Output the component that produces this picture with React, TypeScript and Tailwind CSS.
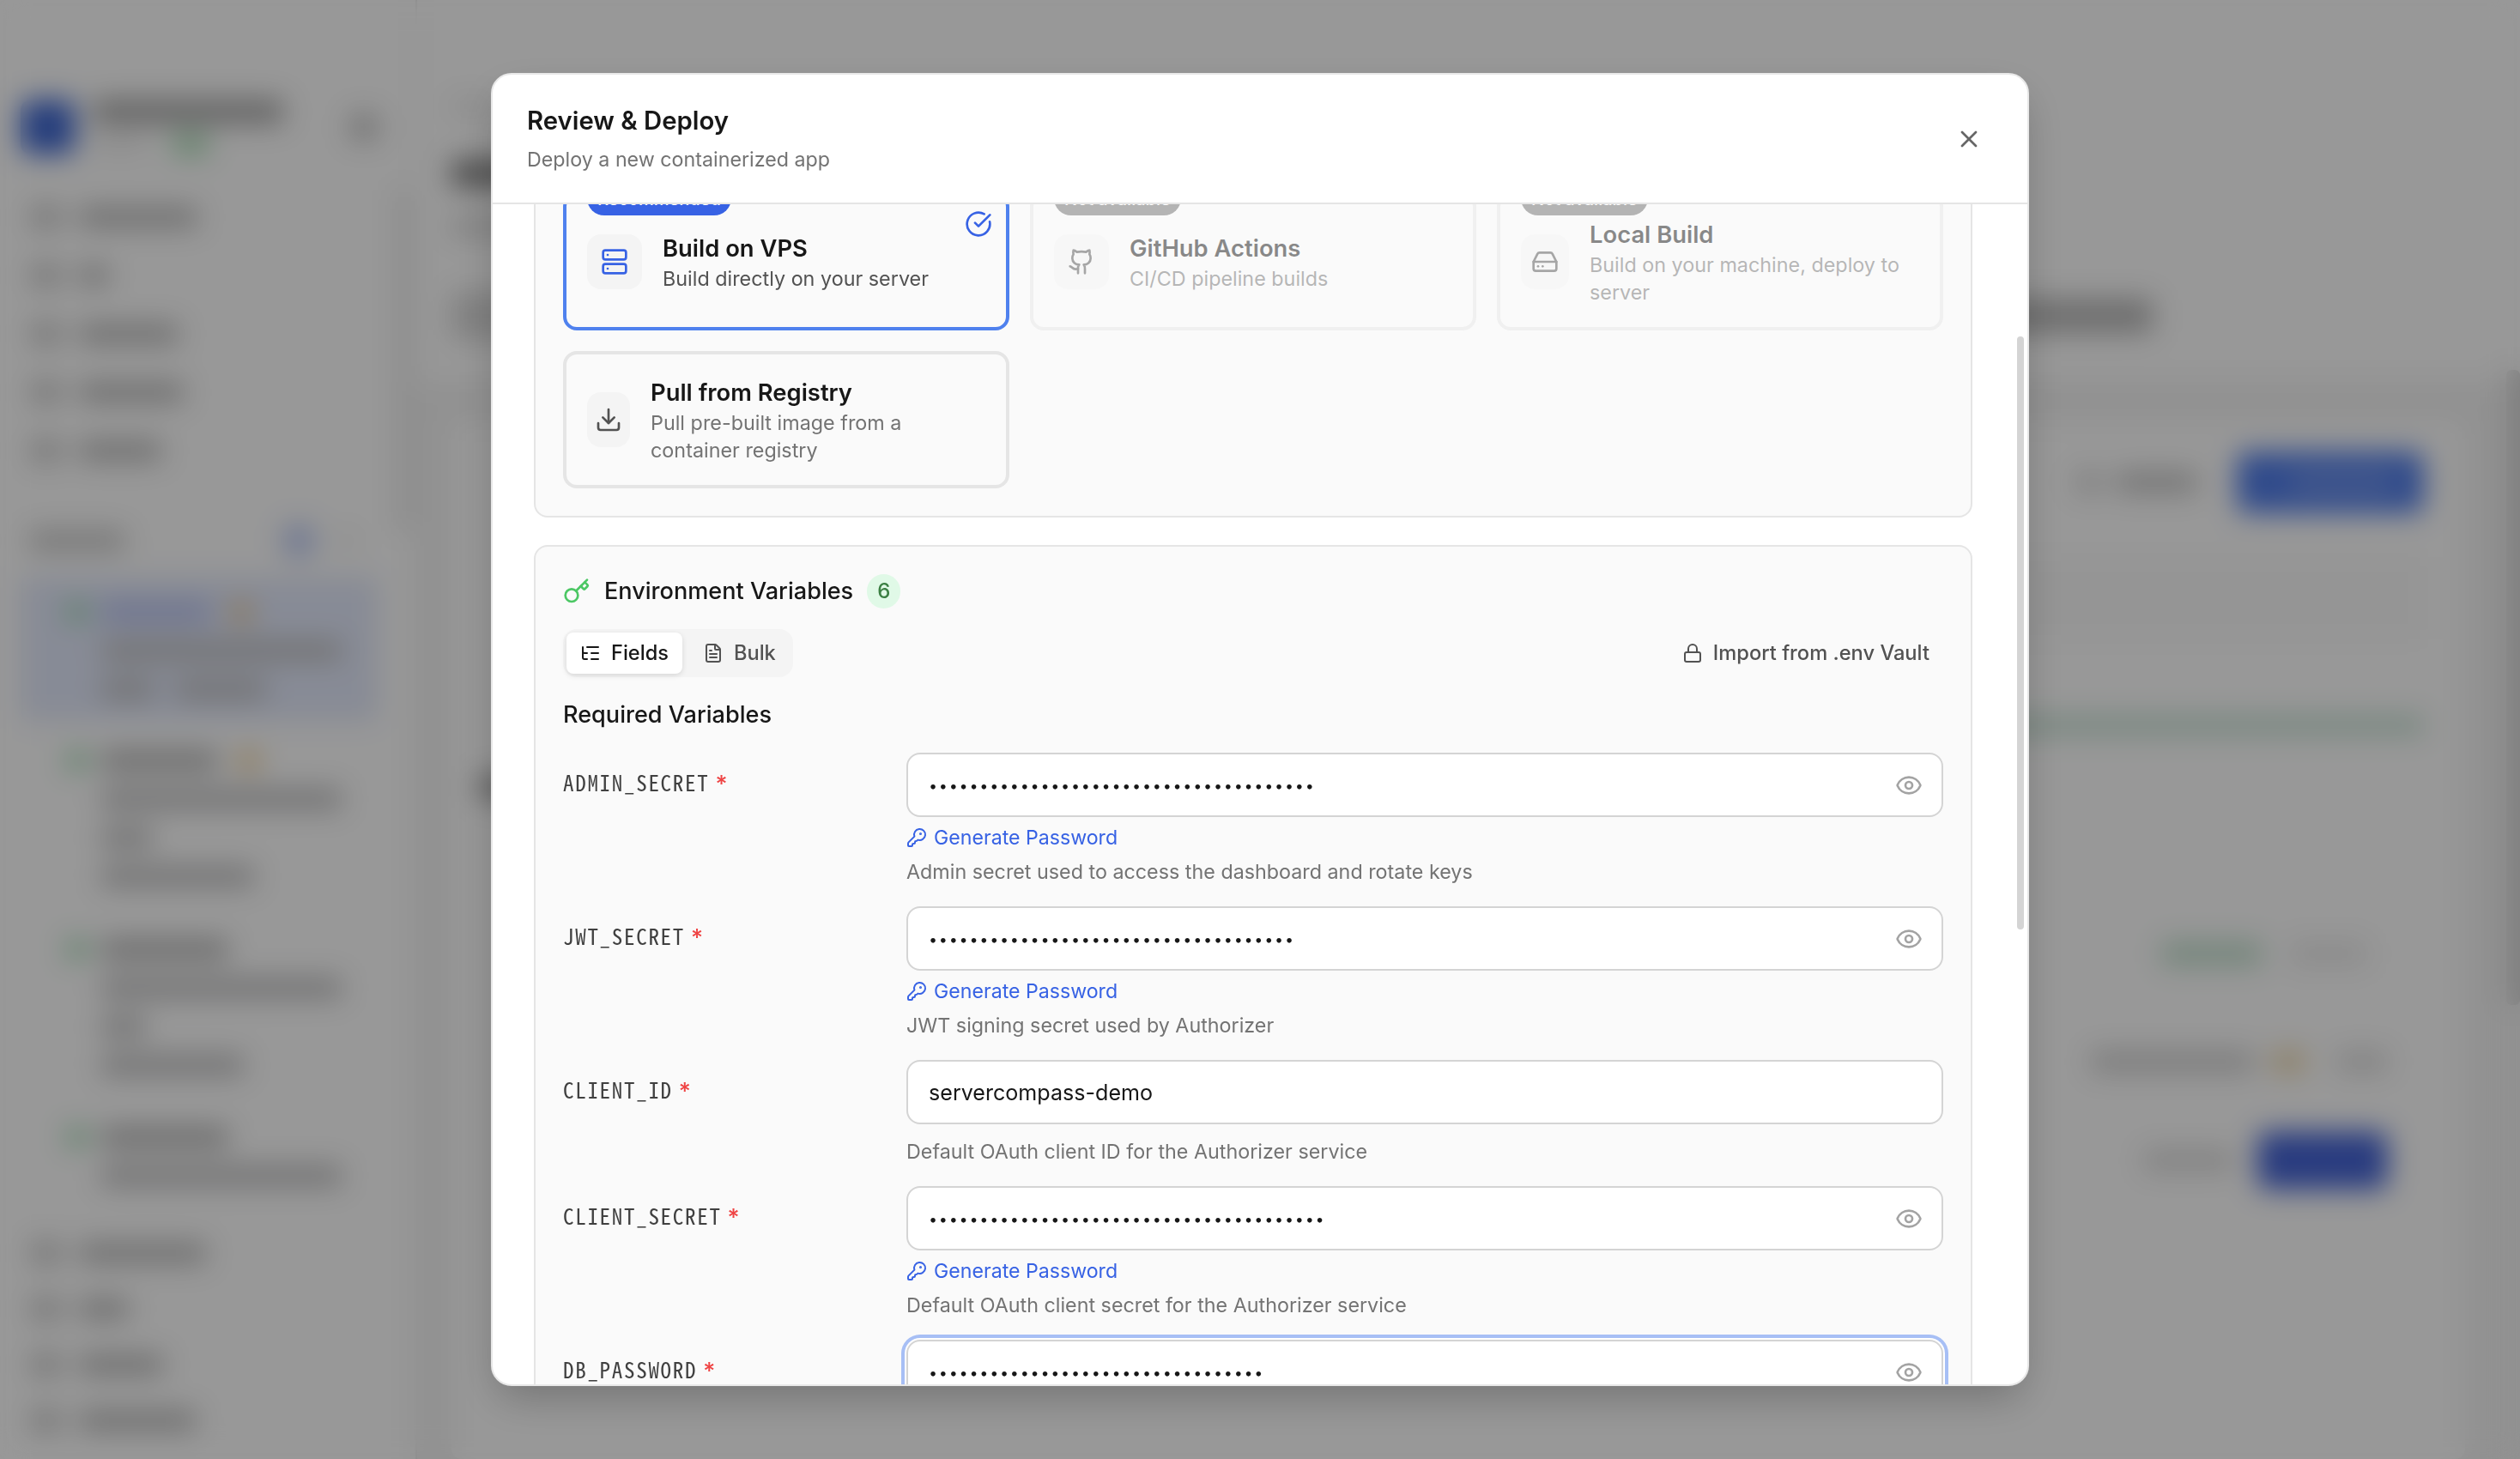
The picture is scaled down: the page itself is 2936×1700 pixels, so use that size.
import type { ReactNode } from "react";
import {
  CircleCheckBig,
  Download,
  Eye,
  FileText,
  Github,
  HardDrive,
  Key,
  KeyRound,
  ListTree,
  Lock,
  Server,
  X,
} from "lucide-react";

/* ---------- Page behind the dialog ---------- */

function Bar({ className }: { className: string }) {
  return <div className={`shrink-0 rounded-md ${className}`} />;
}

function NavRow({ height, width }: { height: string; width: string }) {
  return (
    <div className={`flex items-center pl-9 ${height}`}>
      <Bar className="h-7 w-9 bg-[#cacaca]" />
      <Bar className={`ml-5 h-6 bg-[#bababa] ${width}`} />
    </div>
  );
}

type ServerLine = { width: string; extra?: string };

function ServerItem({
  name,
  nameTone,
  starred,
  lines,
}: {
  name: string;
  nameTone: string;
  starred?: boolean;
  lines: ServerLine[];
}) {
  return (
    <div>
      <div className="flex h-[45px] items-center pl-[78px]">
        <Bar className="h-5 w-6 rounded-full bg-[#8fd3a3]" />
        <Bar className={`ml-4 h-6 ${name} ${nameTone}`} />
        {starred && <Bar className="ml-6 h-5 w-6 rounded-full bg-[#e9c078]" />}
      </div>
      {lines.map((line, i) => (
        <div key={i} className="flex h-[45px] items-center pl-[118px]">
          <Bar className={`h-6 bg-[#bfbfc0] ${line.width}`} />
          {line.extra && <Bar className={`ml-6 h-6 bg-[#bfbfc0] ${line.extra}`} />}
        </div>
      ))}
    </div>
  );
}

function Sidebar() {
  return (
    <div className="flex w-[486px] shrink-0 border-r-2 border-neutral-200 bg-[#fdfdfd]">
      <div className="flex w-[458px] shrink-0 flex-col">
        <div className="mt-[116px] flex h-16 pl-6">
          <Bar className="h-16 w-16 rounded-xl bg-[#4068d0]" />
          <div className="ml-5 flex w-[220px] flex-col">
            <Bar className="h-7 w-[222px] bg-[#a6a6a6]" />
            <div className="mt-3 flex items-center">
              <Bar className="h-4 w-16 bg-neutral-200" />
              <Bar className="ml-7 h-6 w-11 bg-[#a9dcb4]" />
            </div>
          </div>
          <Bar className="mt-4 ml-[80px] h-8 w-8 bg-[#c4c4c4]" />
        </div>
        <div className="mt-[39px]">
          <NavRow height="h-[68px]" width="w-[138px]" />
          <NavRow height="h-[68px]" width="w-[34px]" />
          <NavRow height="h-[68px]" width="w-[116px]" />
          <NavRow height="h-[68px]" width="w-[122px]" />
          <NavRow height="h-[68px]" width="w-[96px]" />
        </div>
        <div className="mt-[51px] flex h-10 items-center pl-[34px]">
          <Bar className="h-6 w-[112px] bg-[#c8c8c8]" />
          <Bar className="ml-[184px] h-9 w-9 bg-[#bccaf4]" />
          <Bar className="ml-7 h-4 w-5 bg-neutral-200" />
        </div>
        <div className="mt-[22px] ml-6 h-[168px] w-[416px] rounded-lg bg-[#e2e8fa] pt-[18px]">
          <div className="-ml-6">
            <ServerItem
              name="w-[127px]"
              nameTone="bg-[#b6c0ee]"
              starred
              lines={[{ width: "w-[280px]" }, { width: "w-[62px]", extra: "w-[106px]" }]}
            />
          </div>
        </div>
        <div className="mt-[23px]">
          <ServerItem
            name="w-[136px]"
            nameTone="bg-[#b4b4b4]"
            starred
            lines={[{ width: "w-[280px]" }, { width: "w-[60px]" }, { width: "w-[178px]" }]}
          />
        </div>
        <div className="mt-10">
          <ServerItem
            name="w-[148px]"
            nameTone="bg-[#b4b4b4]"
            lines={[{ width: "w-[280px]" }, { width: "w-[52px]" }, { width: "w-[166px]" }]}
          />
        </div>
        <div className="mt-[39px]">
          <ServerItem name="w-[148px]" nameTone="bg-[#b4b4b4]" lines={[{ width: "w-[280px]" }]} />
        </div>
        <div className="mt-[35px]">
          <NavRow height="h-[65px]" width="w-[148px]" />
          <NavRow height="h-[65px]" width="w-[58px]" />
          <NavRow height="h-[65px]" width="w-[98px]" />
          <NavRow height="h-[65px]" width="w-[136px]" />
        </div>
      </div>
      <Bar className="mt-[220px] ml-1.5 h-[400px] w-3 bg-[#e0e0e0]" />
    </div>
  );
}

function MainArea() {
  return (
    <div className="flex min-w-0 grow flex-col bg-[#f2f2f2]">
      <div className="flex h-[445px] flex-col bg-[#fdfdfd] pl-10">
        <div className="mt-[116px] h-4 w-12 shrink-0 rounded bg-neutral-200" />
        <div className="mt-[54px] h-8 w-[260px] shrink-0 rounded bg-[#828282]" />
        <div className="mt-[36px] h-5 w-[260px] shrink-0 rounded bg-[#d4d4d4]" />
        <div className="mt-[66px] flex w-[1982px] items-center justify-between">
          <Bar className="h-14 w-[300px] bg-[#d8d8d8]" />
          <Bar className="h-10 w-[300px] bg-[#b8b8b8]" />
        </div>
      </div>
      <div className="flex grow">
        <div className="mt-11 ml-10 flex w-[2346px] flex-col items-end rounded-xl bg-[#fdfdfd] pr-[48px]">
          <div className="mt-[36px] flex h-[74px] items-center">
            <Bar className="h-7 w-8 bg-[#d8d8d8]" />
            <Bar className="ml-4 h-6 w-[94px] bg-[#c2c2c2]" />
            <div className="ml-[46px] flex h-[72px] w-[218px] items-center justify-end rounded-xl bg-[#517de8] pr-9">
              <Bar className="h-4 w-[120px] bg-[#86a3ec]" />
            </div>
          </div>
          <Bar className="mt-[50px] h-[96px] w-[2200px] bg-[#f9f9f9]" />
          <Bar className="mt-[90px] h-5 w-[2200px] rounded-full bg-[#c2dfd0]" />
          <Bar className="mt-[48px] ml-8 h-7 w-[200px] self-start bg-[#9a9a9a]" />
          <div className="mt-[166px] mr-[66px] flex items-center">
            <Bar className="h-7 w-[118px] rounded-full bg-[#c2dfcd]" />
            <Bar className="ml-8 h-7 w-[90px] bg-[#e9e9e9]" />
          </div>
          <div className="mt-[100px] mr-[42px] flex items-center">
            <Bar className="h-6 w-[190px] bg-[#cecece]" />
            <Bar className="ml-5 h-6 w-10 bg-[#ecd5a6]" />
            <Bar className="ml-9 h-6 w-[60px] bg-[#dadada]" />
          </div>
          <div className="mt-[69px] mr-[42px] flex items-center">
            <Bar className="h-6 w-[104px] bg-[#d8d8d8]" />
            <Bar className="ml-7 h-[68px] w-[152px] rounded-xl bg-[#4564d4]" />
          </div>
        </div>
        <Bar className="mt-[-14px] ml-auto h-[740px] w-4 bg-[#d6d6d6]" />
      </div>
    </div>
  );
}

/* ---------- Dialog ---------- */

function BuildCard({
  icon,
  title,
  description,
  badge,
  selected,
  disabled,
}: {
  icon: ReactNode;
  title: string;
  description: string;
  badge?: string;
  selected?: boolean;
  disabled?: boolean;
}) {
  return (
    <div
      className={`relative flex h-40 items-center rounded-2xl border-4 bg-[#fafafa] px-6 ${
        selected ? "border-[#4f81ee]" : "border-[#e5e5e5]"
      } ${disabled ? "opacity-50" : ""}`}
    >
      {badge && (
        <span
          className={`absolute -top-[18px] left-6 flex h-10 items-center rounded-full px-3 pt-0.5 text-[20px] font-medium whitespace-nowrap text-white ${
            selected ? "bg-[#3762e4]" : "bg-[#6e6e6e]"
          }`}
        >
          {badge}
        </span>
      )}
      {selected && <CircleCheckBig className="absolute top-4 right-4 size-8 text-[#3762e4]" />}
      <div
        className={`flex h-16 items-center justify-center rounded-2xl bg-[#f4f4f4] px-4 ${
          selected ? "text-[#3762e4]" : "text-[#525252]"
        }`}
      >
        {icon}
      </div>
      <div className="ml-6 min-w-0">
        <div className="text-[27.4px] leading-10 font-semibold text-[#171717]">{title}</div>
        <div
          className={`text-[23.35px] leading-8 ${selected ? "text-[#525252]" : "text-[#737373]"}`}
        >
          {description}
        </div>
      </div>
    </div>
  );
}

function BuildMethods() {
  return (
    <section className="rounded-2xl border-2 border-[#e5e5e5] bg-[#fafafa] p-8">
      <div className="grid grid-cols-3 gap-6">
        <BuildCard
          selected
          badge="Recommended"
          title="Build on VPS"
          description="Build directly on your server"
          icon={<Server className="size-8" />}
        />
        <BuildCard
          disabled
          badge="Not available"
          title="GitHub Actions"
          description="CI/CD pipeline builds"
          icon={<Github className="size-8" />}
        />
        <BuildCard
          disabled
          badge="Not available"
          title="Local Build"
          description="Build on your machine, deploy to server"
          icon={<HardDrive className="-mx-1 size-8" />}
        />
        <BuildCard
          title="Pull from Registry"
          description="Pull pre-built image from a container registry"
          icon={<Download className="-mx-[7px] size-8" />}
        />
      </div>
    </section>
  );
}

type Variable = {
  name: string;
  help?: string;
  value?: string;
  secretLength?: number;
  focused?: boolean;
};

const variables: Variable[] = [
  {
    name: "ADMIN_SECRET",
    secretLength: 38,
    help: "Admin secret used to access the dashboard and rotate keys",
  },
  { name: "JWT_SECRET", secretLength: 36, help: "JWT signing secret used by Authorizer" },
  {
    name: "CLIENT_ID",
    value: "servercompass-demo",
    help: "Default OAuth client ID for the Authorizer service",
  },
  {
    name: "CLIENT_SECRET",
    secretLength: 39,
    help: "Default OAuth client secret for the Authorizer service",
  },
  { name: "DB_PASSWORD", secretLength: 33, focused: true },
];

function VariableRow({ name, help, value, secretLength, focused }: Variable) {
  return (
    <div className="grid grid-cols-[400px_1fr]">
      <div className="flex h-[75px] items-center">
        <span className="mb-[7px] font-['Noto_Sans_Mono_CJK_SC','Liberation_Mono',monospace] text-[25px] leading-8 tracking-[1.7px] text-[#404040]">
          {name}
        </span>
        <span className="mb-px ml-[7px] text-[27px] leading-8 font-medium text-[#ef4444]">*</span>
      </div>
      <div>
        <div
          className={`flex h-[75px] items-center justify-between rounded-2xl border-2 border-[#d4d4d4] bg-white px-6 ${
            focused ? "shadow-[0_0_0_2px_#ffffff,0_0_0_6px_#a7bff5]" : ""
          }`}
        >
          {secretLength ? (
            <>
              <span className="mt-0.5 text-[18px] tracking-[1.73px] text-[#171717]">
                {"•".repeat(secretLength)}
              </span>
              <Eye className="-mr-0.5 size-8 text-[#a3a3a3]" />
            </>
          ) : (
            <span className="mt-0.5 text-[25.1px] text-[#171717]">{value}</span>
          )}
        </div>
        {secretLength && help && (
          <div className="mt-2 flex h-8 items-center gap-2 text-[23.15px] text-[#3762e4]">
            <KeyRound className="size-6" />
            Generate Password
          </div>
        )}
        {help && (
          <div
            className={`text-[23.3px] leading-8 text-[#737373] ${secretLength ? "mt-2" : "mt-4"}`}
          >
            {help}
          </div>
        )}
      </div>
    </div>
  );
}

function EnvironmentVariables() {
  return (
    <section className="mt-8 h-[1100px] shrink-0 rounded-2xl border-2 border-[#e5e5e5] bg-[#fafafa] p-8">
      <div className="flex h-10 items-center">
        <Key className="size-8 text-[#4cc764]" />
        <h3 className="ml-4 text-[27.1px] font-medium text-[#171717]">Environment Variables</h3>
        <span className="ml-4 flex h-10 w-[39px] items-center justify-center rounded-full bg-[#e0f9e7] text-[24px] font-medium text-[#3b7f43]">
          6
        </span>
      </div>
      <div className="mt-6 flex h-14 items-center justify-between">
        <div className="flex h-14 items-center gap-2 rounded-2xl bg-[#f4f4f4] p-1">
          <div className="flex h-12 items-center gap-3 rounded-lg bg-white px-4 text-[23.6px] font-medium text-[#171717] shadow-[0_2px_6px_rgba(0,0,0,0.12)]">
            <ListTree className="size-6" />
            Fields
          </div>
          <div className="flex h-12 items-center gap-3 rounded-lg px-4 text-[23.6px] font-medium text-[#525252]">
            <FileText className="size-6" />
            Bulk
          </div>
        </div>
        <div className="flex items-center gap-3 px-4 text-[23.7px] font-medium text-[#525252]">
          <Lock className="size-6" />
          Import from .env Vault
        </div>
      </div>
      <h4 className="mt-6 text-[27.1px] leading-10 font-medium text-[#171717]">
        Required Variables
      </h4>
      <div className="mt-6 flex flex-col gap-6">
        {variables.map((v) => (
          <VariableRow key={v.name} {...v} />
        ))}
      </div>
    </section>
  );
}

function Dialog() {
  return (
    <div className="flex h-[1530px] w-[1792px] flex-col overflow-hidden rounded-3xl border-2 border-[#e8e8e8] bg-white shadow-[0_20px_50px_-8px_rgba(0,0,0,0.25)]">
      <header className="flex h-[151px] shrink-0 items-center justify-between border-b-2 border-[#e5e5e5] px-10">
        <div>
          <h2 className="mt-px text-[29.3px] leading-[44px] font-semibold text-[#171717]">
            Review &amp; Deploy
          </h2>
          <p className="mt-[3px] text-[23.25px] leading-10 text-[#737373]">
            Deploy a new containerized app
          </p>
        </div>
        <div className="flex size-14 items-center justify-center">
          <X className="size-8 text-[#666666]" />
        </div>
      </header>
      <div className="flex min-h-0 grow">
        <div className="-mt-[47px] flex min-h-0 w-[1772px] flex-col pr-12 pl-12 [clip-path:inset(47px_0_0_0)]">
          <BuildMethods />
          <EnvironmentVariables />
        </div>
        <div className="mt-[154px] ml-1 h-[691px] w-2 rounded-full bg-[#d4d4d4]" />
      </div>
    </div>
  );
}

export default function App() {
  return (
    <div className="relative h-[1700px] w-[2936px] overflow-hidden font-['Inter',sans-serif]">
      <div className="flex h-full w-full overflow-hidden">
        <Sidebar />
        <MainArea />
      </div>
      <div className="absolute inset-0 flex items-center justify-center bg-black/40 backdrop-blur-[16px]">
        <Dialog />
      </div>
    </div>
  );
}
